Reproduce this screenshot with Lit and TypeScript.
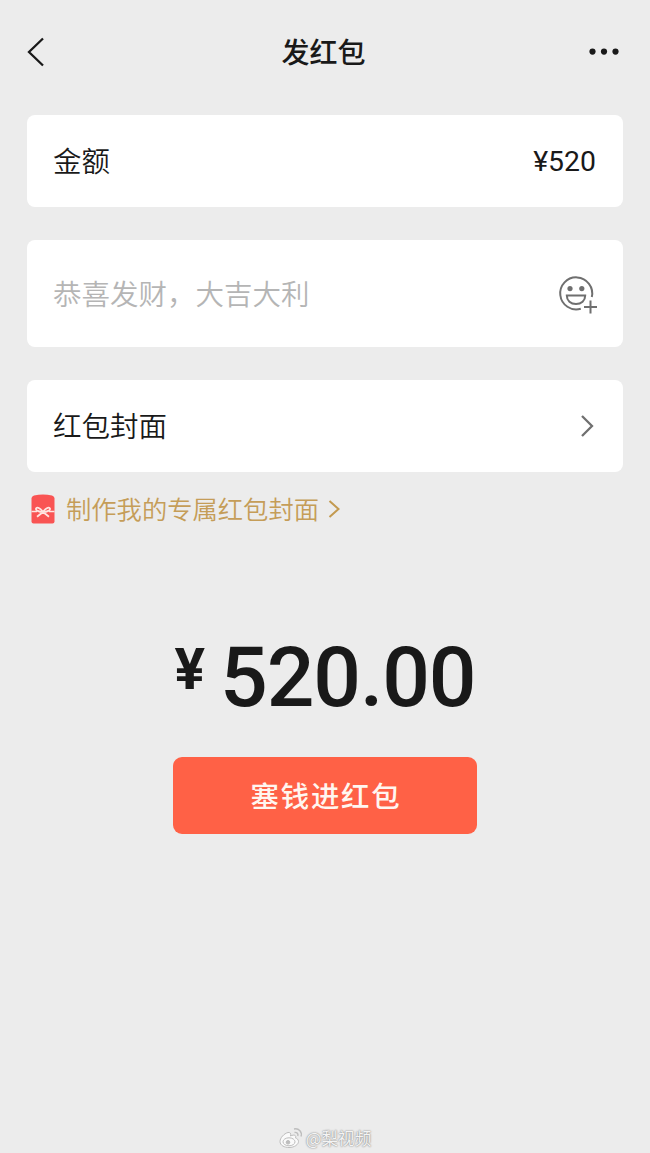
import { LitElement, html, css } from "lit";
import { customElement } from "lit/decorators.js";

@customElement("app-root")
export class AppRoot extends LitElement {
  static styles = css`
    :host {
      display: flex;
      flex-direction: column;
      box-sizing: border-box;
      height: 1153px;
      overflow: hidden;
      background: #ececec;
      color: #191919;
      font-family: "Noto Sans CJK SC", sans-serif;
      white-space: nowrap;
    }
    svg {
      display: block;
      flex: none;
    }
    .bar {
      display: grid;
      grid-template-columns: 1fr auto 1fr;
      align-items: center;
      height: 103px;
      padding: 0 30px 0 27px;
      box-sizing: border-box;
    }
    .title {
      font-size: 28px;
      font-weight: 500;
      line-height: 40px;
      padding-bottom: 2px;
    }
    .more {
      justify-self: end;
    }
    .form {
      display: flex;
      flex-direction: column;
      gap: 33px;
      padding: 12px 27px 0;
    }
    .card {
      display: flex;
      align-items: center;
      justify-content: space-between;
      box-sizing: border-box;
      height: 92px;
      padding: 0 26px 0 26px;
      border-radius: 8px;
      background: #fff;
      font-size: 28.5px;
      line-height: 40px;
      font-weight: 350;
    }
    .card .label {
      padding-bottom: 2px;
    }
    .wish {
      height: 107px;
      color: #b5b5b5;
    }
    .wish svg {
      margin-top: 1px;
    }
    .sum {
      font-family: Roboto, sans-serif;
      font-size: 28.4px;
      font-weight: 400;
      padding: 2px 1px 0 0;
    }
    .custom {
      display: flex;
      align-items: center;
      height: 36px;
      margin: 19px 0 0 31px;
      color: #c59d58;
      font-size: 25.3px;
      font-weight: 350;
    }
    .custom span {
      margin: 0 9px 2px 11px;
    }
    .total {
      display: flex;
      justify-content: center;
      align-items: flex-start;
      height: 84px;
      margin-top: 108px;
      font-family: Roboto, sans-serif;
      font-weight: 500;
    }
    .yen {
      font-size: 57px;
      line-height: 64px;
      font-weight: 700;
      margin: 3px 15px 0 0;
    }
    .digits {
      font-size: 84px;
      line-height: 84px;
      letter-spacing: -1.1px;
      margin-top: 1px;
    }
    .pay {
      align-self: center;
      width: 304px;
      height: 77px;
      margin-top: 38px;
      padding: 0 0 2px 2px;
      border: 0;
      border-radius: 9px;
      background: #ff6146;
      color: #fff6f0;
      font: 500 28.4px/40px "Noto Sans CJK SC", sans-serif;
      letter-spacing: 1.8px;
    }
    .mark {
      display: flex;
      justify-content: center;
      align-items: center;
      gap: 3px;
      height: 26px;
      margin-top: auto;
      padding-bottom: 2px;
      color: #f4f4f4;
      font-size: 16.6px;
      line-height: 24px;
      text-shadow: 0 0 2px #888, 0 0 1px #999;
    }
  `;

  render() {
    return html`
      <header class="bar">
        <svg width="20" height="30" viewBox="0 0 20 30" fill="none" stroke="#191919" stroke-width="2.3">
          <path d="M16 1.5 2 15l14 13.5" />
        </svg>
        <div class="title">发红包</div>
        <svg class="more" width="32" height="8" viewBox="0 0 32 8" fill="#191919">
          <circle cx="4.5" cy="3.6" r="3.1" />
          <circle cx="16" cy="3.6" r="3.1" />
          <circle cx="27.5" cy="3.6" r="3.1" />
        </svg>
      </header>
      <main class="form">
        <div class="card"><span class="label">金额</span><span class="sum">¥520</span></div>
        <div class="card wish">
          <span class="label">恭喜发财，大吉大利</span>
          <svg width="40" height="40" viewBox="0 0 40 40" fill="none" stroke="#6f6f6f" stroke-width="2">
            <path d="M34.8 23A16 16 0 1 0 23.800 34.700" />
            <circle cx="13" cy="14.6" r="2.6" fill="#6f6f6f" stroke="none" />
            <circle cx="24.8" cy="14.6" r="2.6" fill="#6f6f6f" stroke="none" />
            <path d="M9.800 21.400h18.400c0 5.200-3.900 8.600-9.200 8.600s-9.200-3.400-9.200-8.600z" />
            <path d="M33.500 26.500v13M27 33h13" />
          </svg>
        </div>
        <div class="card">
          <span class="label">红包封面</span>
          <svg width="18" height="24" viewBox="0 0 18 24" fill="none" stroke="#707070" stroke-width="2.3">
            <path d="M3 2 13 12 3 22" />
          </svg>
        </div>
      </main>
      <div class="custom">
        <svg width="24" height="30" viewBox="0 0 24 30">
          <path d="M.5 4Q1 2 3 1.5Q12-.5 21 1.5Q23 2 23.5 4V27.5Q23.5 29.5 21.5 29.5H2.5Q.5 29.5 .5 27.5Z" fill="#f95453" />
          <g fill="none" stroke="#ffe4e0" stroke-width="1.8">
            <path d="M.5 17.5H6M18 17.5H23.5" stroke-width="1.5" />
            <path d="M12 18C9.500 14.500 6.500 12.700 5.200 14.300C4 16.300 8 18 12 18C16 18 20 16.300 18.800 14.300C17.500 12.700 14.500 14.500 12 18L6 22.700M12 18L18 22.700" />
          </g>
        </svg>
        <span>制作我的专属红包封面</span>
        <svg width="13" height="20" viewBox="0 0 13 20" fill="none" stroke="#c39a50" stroke-width="2">
          <path d="M1.5 2 10.5 10 1.5 18" />
        </svg>
      </div>
      <div class="total"><span class="yen">¥</span><span class="digits">520.00</span></div>
      <button class="pay">塞钱进红包</button>
      <footer class="mark">
        <svg width="24" height="22" viewBox="0 0 24 22" fill="none" stroke="#bdbdbd">
          <path d="M9 5.5C5 6.5 1 11 1 14.5C1 18.5 5.5 20.5 10 20.5C15.5 20.5 19.5 17.5 19.5 14.5C19.5 12.5 18 11.5 16.5 11C17.5 8.500 15.500 7 11.500 9C12.300 6.500 11 5 9 5.500Z" fill="#fafafa" />
          <ellipse cx="10" cy="14.8" rx="6" ry="4" />
          <circle cx="9" cy="15.3" r="1.8" fill="#bdbdbd" />
          <path d="M15.5 5.5C18 5 19.5 7 18.8 9M15 2C20 1 23.5 5 22 9.5" stroke-width="1.4" />
        </svg>
        <span>@梨视频</span>
      </footer>
    `;
  }
}
